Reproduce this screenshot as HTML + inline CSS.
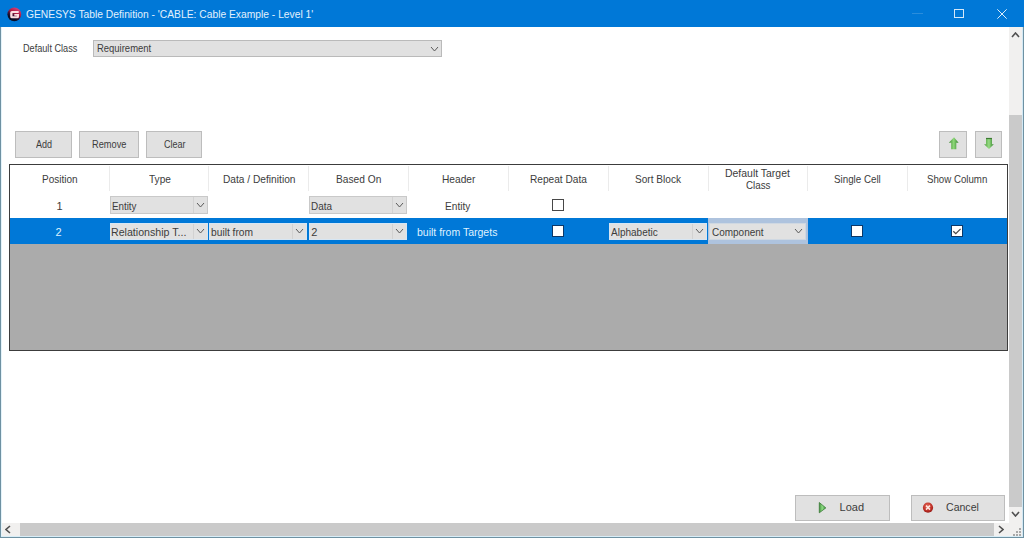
<!DOCTYPE html>
<html><head><meta charset="utf-8">
<style>
html,body{margin:0;padding:0;width:1024px;height:538px;overflow:hidden;background:#fff;}
body{position:relative;font-family:"Liberation Sans",sans-serif;}
div{position:absolute;box-sizing:border-box;}
svg{position:absolute;}
.t{white-space:nowrap;font-size:11px;line-height:11px;color:#3c3c3c;transform-origin:0 0;}
</style></head><body>

<div style="left:0px;top:0px;width:1024px;height:27px;background:#0078d7;"></div>
<svg style="left:7px;top:6.5px" width="15" height="15" viewBox="0 0 15 15">
  <defs><linearGradient id="g1" x1="0.75" y1="0.05" x2="0.25" y2="0.95"><stop offset="0" stop-color="#d8407a"/><stop offset="0.38" stop-color="#b01c44"/><stop offset="0.6" stop-color="#401234"/><stop offset="0.8" stop-color="#0a0c24"/></linearGradient></defs>
  <circle cx="7.3" cy="7.3" r="6.9" fill="url(#g1)"/>
  <path d="M11.7 4.0 H5.0 Q3.2 4.0 3.2 5.8 V9.4 Q3.2 11.3 5.0 11.3 H10.1 Q12.0 11.3 12.0 9.4 V7.0 H7.3 V8.8 H9.8 V9.3 H5.5 V6.0 H11.7 Z" fill="#fcdde2"/>
</svg>
<div class="t" style="left:26.00px;top:8.70px;transform:scaleX(0.935);color:#e2f1fd;">GENESYS Table Definition - 'CABLE: Cable Example - Level 1'</div>
<div style="left:912px;top:13px;width:11px;height:1px;background:#2a8ddc;"></div>
<div style="left:954px;top:9px;width:10px;height:9px;border:1px solid #d4e8f8;"></div>
<svg style="left:996px;top:8px" width="12" height="12" viewBox="0 0 12 12"><path d="M1.3 1.3 L10.7 10.7 M10.7 1.3 L1.3 10.7" stroke="#dcedfa" stroke-width="1"/></svg>
<div style="left:0px;top:27px;width:1px;height:511px;background:#6e91a2;"></div>
<div style="left:1023px;top:27px;width:1px;height:511px;background:#6e91a2;"></div>
<div style="left:0px;top:537px;width:1024px;height:1px;background:#6e91a2;"></div>
<div class="t" style="left:22.80px;top:42.80px;transform:scaleX(0.83);">Default Class</div>
<div style="left:93px;top:40px;width:349px;height:17px;background:#e1e1e1;border:1px solid #bababa;"></div>
<div class="t" style="left:96.80px;top:42.80px;transform:scaleX(0.86);">Requirement</div>
<svg style="position:absolute;left:430.00px;top:45.50px" width="9" height="6" viewBox="0 0 9 6"><path d="M1 1 L4.5 5 L8 1" fill="none" stroke="#5a5a5a" stroke-width="1.0"/></svg>
<div style="left:15px;top:131px;width:57px;height:27px;background:#e1e1e1;border:1px solid #bdbdbd;"></div>
<div class="t" style="left:36.30px;top:138.80px;transform:scaleX(0.82);">Add</div>
<div style="left:79px;top:131px;width:60px;height:27px;background:#e1e1e1;border:1px solid #bdbdbd;"></div>
<div class="t" style="left:91.60px;top:138.80px;transform:scaleX(0.84);">Remove</div>
<div style="left:146px;top:131px;width:56px;height:27px;background:#e1e1e1;border:1px solid #bdbdbd;"></div>
<div class="t" style="left:164.30px;top:138.80px;transform:scaleX(0.82);">Clear</div>
<div style="left:939px;top:131px;width:28px;height:27px;background:#e1e1e1;border:1px solid #bdbdbd;"></div>
<div style="left:975px;top:131px;width:27px;height:27px;background:#e1e1e1;border:1px solid #bdbdbd;"></div>
<svg style="left:944px;top:134px" width="20" height="20" viewBox="0 0 20 20">
<defs><linearGradient id="ga" x1="0" x2="1"><stop offset="0" stop-color="#3c8a30"/><stop offset="0.5" stop-color="#8fd87a"/><stop offset="1" stop-color="#2f7f28"/></linearGradient></defs>
<path d="M10 3.3 L14.6 8.7 H12.3 V15.2 H7.2 V8.7 H4.8 Z" fill="url(#ga)"/></svg>
<svg style="left:979px;top:134px" width="20" height="20" viewBox="0 0 20 20">
<defs><linearGradient id="gb" x1="0" x2="1"><stop offset="0" stop-color="#4a9a3c"/><stop offset="0.5" stop-color="#98dc84"/><stop offset="1" stop-color="#2f7f28"/></linearGradient></defs>
<path d="M7 3.9 H13 V10.2 H14.8 L10 15 L5.1 10.2 H7 Z" fill="url(#gb)"/><rect x="7" y="3.9" width="6" height="1.2" fill="#3d7a34"/></svg>
<div style="left:9px;top:164px;width:999px;height:187px;background:#ababab;border:1px solid #3c3c3c;"></div>
<div style="left:10px;top:165px;width:997px;height:53px;background:#fff;"></div>
<div style="left:10px;top:218px;width:997px;height:26px;background:#0078d7;"></div>
<div style="left:109px;top:166px;width:1px;height:25px;background:#ebebeb;"></div>
<div style="left:208px;top:166px;width:1px;height:25px;background:#ebebeb;"></div>
<div style="left:308px;top:166px;width:1px;height:25px;background:#ebebeb;"></div>
<div style="left:408px;top:166px;width:1px;height:25px;background:#ebebeb;"></div>
<div style="left:508px;top:166px;width:1px;height:25px;background:#ebebeb;"></div>
<div style="left:608px;top:166px;width:1px;height:25px;background:#ebebeb;"></div>
<div style="left:708px;top:166px;width:1px;height:25px;background:#ebebeb;"></div>
<div style="left:807px;top:166px;width:1px;height:25px;background:#ebebeb;"></div>
<div style="left:907px;top:166px;width:1px;height:25px;background:#ebebeb;"></div>
<div class="t" style="left:41.90px;top:173.50px;transform:scaleX(0.91);">Position</div>
<div class="t" style="left:148.80px;top:173.50px;transform:scaleX(0.92);">Type</div>
<div class="t" style="left:222.50px;top:173.50px;transform:scaleX(0.926);">Data / Definition</div>
<div class="t" style="left:335.80px;top:173.50px;transform:scaleX(0.926);">Based On</div>
<div class="t" style="left:442.00px;top:173.50px;transform:scaleX(0.925);">Header</div>
<div class="t" style="left:530.30px;top:173.50px;transform:scaleX(0.92);">Repeat Data</div>
<div class="t" style="left:635.40px;top:173.50px;transform:scaleX(0.918);">Sort Block</div>
<div class="t" style="left:834.20px;top:173.50px;transform:scaleX(0.89);">Single Cell</div>
<div class="t" style="left:926.70px;top:173.50px;transform:scaleX(0.88);">Show Column</div>
<div class="t" style="left:725.40px;top:168.30px;transform:scaleX(0.95);">Default Target</div>
<div class="t" style="left:745.50px;top:179.60px;transform:scaleX(0.89);">Class</div>
<div style="left:110px;top:196px;width:98px;height:18px;background:#e1e1e1;border:1px solid #c9c9c9;"></div>
<div style="left:193px;top:197px;width:1px;height:16px;background:#d2d2d2;"></div>
<svg style="position:absolute;left:196.00px;top:202.20px" width="9" height="6" viewBox="0 0 9 6"><path d="M1 1 L4.5 5 L8 1" fill="none" stroke="#5a5a5a" stroke-width="1.0"/></svg>
<div style="left:309px;top:196px;width:98px;height:18px;background:#e1e1e1;border:1px solid #c9c9c9;"></div>
<div style="left:392px;top:197px;width:1px;height:16px;background:#d2d2d2;"></div>
<svg style="position:absolute;left:395.00px;top:202.20px" width="9" height="6" viewBox="0 0 9 6"><path d="M1 1 L4.5 5 L8 1" fill="none" stroke="#5a5a5a" stroke-width="1.0"/></svg>
<div class="t" style="left:56.40px;top:200.50px;">1</div>
<div class="t" style="left:112.10px;top:200.50px;transform:scaleX(0.89);">Entity</div>
<div class="t" style="left:311.30px;top:200.50px;transform:scaleX(0.9);">Data</div>
<div class="t" style="left:444.50px;top:200.50px;transform:scaleX(0.92);">Entity</div>
<div style="left:552px;top:199px;width:12px;height:12px;background:#fff;border:1px solid #484848;"></div>
<div style="left:708px;top:218px;width:100px;height:26px;background:#aec3de;"></div>
<div style="left:110px;top:223px;width:98px;height:17px;background:#e1e1e1;border:1px solid #d6e6f4;"></div>
<div style="left:193px;top:224px;width:1px;height:15px;background:#d2d2d2;"></div>
<svg style="position:absolute;left:196.00px;top:228.20px" width="9" height="6" viewBox="0 0 9 6"><path d="M1 1 L4.5 5 L8 1" fill="none" stroke="#5a5a5a" stroke-width="1.0"/></svg>
<div style="left:209px;top:223px;width:98px;height:17px;background:#e1e1e1;border:1px solid #d6e6f4;"></div>
<div style="left:292px;top:224px;width:1px;height:15px;background:#d2d2d2;"></div>
<svg style="position:absolute;left:295.00px;top:228.20px" width="9" height="6" viewBox="0 0 9 6"><path d="M1 1 L4.5 5 L8 1" fill="none" stroke="#5a5a5a" stroke-width="1.0"/></svg>
<div style="left:309px;top:223px;width:98px;height:17px;background:#e1e1e1;border:1px solid #d6e6f4;"></div>
<div style="left:392px;top:224px;width:1px;height:15px;background:#d2d2d2;"></div>
<svg style="position:absolute;left:395.00px;top:228.20px" width="9" height="6" viewBox="0 0 9 6"><path d="M1 1 L4.5 5 L8 1" fill="none" stroke="#5a5a5a" stroke-width="1.0"/></svg>
<div style="left:609px;top:223px;width:98px;height:17px;background:#e1e1e1;border:1px solid #d6e6f4;"></div>
<div style="left:692px;top:224px;width:1px;height:15px;background:#d2d2d2;"></div>
<svg style="position:absolute;left:695.00px;top:228.20px" width="9" height="6" viewBox="0 0 9 6"><path d="M1 1 L4.5 5 L8 1" fill="none" stroke="#5a5a5a" stroke-width="1.0"/></svg>
<div style="left:709px;top:223px;width:97px;height:17px;background:#e1e1e1;border:1px solid #cfd8e2;"></div>
<svg style="position:absolute;left:794.00px;top:228.20px" width="9" height="6" viewBox="0 0 9 6"><path d="M1 1 L4.5 5 L8 1" fill="none" stroke="#5a5a5a" stroke-width="1.0"/></svg>
<div class="t" style="left:55.60px;top:227.00px;color:#dff1ff;">2</div>
<div class="t" style="left:111.40px;top:226.50px;transform:scaleX(0.965);">Relationship T...</div>
<div class="t" style="left:211.30px;top:226.50px;transform:scaleX(0.93);">built from</div>
<div class="t" style="left:311.30px;top:226.50px;">2</div>
<div class="t" style="left:416.50px;top:226.50px;transform:scaleX(0.955);color:#dff1ff;">built from Targets</div>
<div class="t" style="left:611.30px;top:226.50px;transform:scaleX(0.91);">Alphabetic</div>
<div class="t" style="left:711.50px;top:226.50px;transform:scaleX(0.907);">Component</div>
<div style="left:552px;top:225px;width:12px;height:12px;background:#fff;border:1px solid #0c3868;"></div>
<div style="left:851px;top:225px;width:12px;height:12px;background:#fff;border:1px solid #0c3868;"></div>
<div style="left:951px;top:225px;width:12px;height:12px;background:#fff;border:1px solid #0c3868;"></div>
<svg style="left:951px;top:225px" width="12" height="12" viewBox="0 0 12 12"><path d="M2.3 6.3 L4.8 8.7 L9.6 3.9" fill="none" stroke="#4a4a4a" stroke-width="1.3"/></svg>
<div style="left:1009px;top:27px;width:13px;height:496px;background:#f1f0ef;"></div>
<div style="left:1009px;top:115px;width:13px;height:392px;background:#cacaca;"></div>
<div style="left:1px;top:523px;width:1008px;height:13px;background:#f1f0ef;"></div>
<div style="left:20px;top:523px;width:974px;height:13px;background:#cacaca;"></div>
<div style="left:1009px;top:523px;width:13px;height:13px;background:#f1f0ef;"></div>
<div style="left:1px;top:27px;width:1px;height:509px;background:#e4f3fa;"></div>
<div style="left:1022px;top:27px;width:1px;height:509px;background:#d2e8f4;"></div>
<div style="left:1px;top:536px;width:1022px;height:1px;background:#d8edf7;"></div>
<svg style="position:absolute;left:1011.00px;top:32.00px" width="9" height="6" viewBox="0 0 9 6"><path d="M1 5 L4.5 1 L8 5" fill="none" stroke="#505050" stroke-width="1.6"/></svg>
<svg style="position:absolute;left:1011.00px;top:511.20px" width="9" height="6" viewBox="0 0 9 6"><path d="M1 1 L4.5 5 L8 1" fill="none" stroke="#505050" stroke-width="1.6"/></svg>
<svg style="position:absolute;left:4.50px;top:525.00px" width="6" height="9" viewBox="0 0 6 9"><path d="M5 1 L1 4.5 L5 8" fill="none" stroke="#505050" stroke-width="1.6"/></svg>
<svg style="position:absolute;left:997.50px;top:525.00px" width="6" height="9" viewBox="0 0 6 9"><path d="M1 1 L5 4.5 L1 8" fill="none" stroke="#505050" stroke-width="1.6"/></svg>
<div style="left:1019px;top:528px;width:2px;height:2px;background:#a8a8a8;"></div>
<div style="left:1016px;top:531px;width:2px;height:2px;background:#a8a8a8;"></div>
<div style="left:1019px;top:531px;width:2px;height:2px;background:#a8a8a8;"></div>
<div style="left:1013px;top:534px;width:2px;height:2px;background:#a8a8a8;"></div>
<div style="left:1016px;top:534px;width:2px;height:2px;background:#a8a8a8;"></div>
<div style="left:1019px;top:534px;width:2px;height:2px;background:#a8a8a8;"></div>
<div style="left:795px;top:495px;width:95px;height:26px;background:#e1e1e1;border:1px solid #bdbdbd;"></div>
<div class="t" style="left:839.60px;top:501.70px;">Load</div>
<svg style="left:812px;top:498px" width="20" height="20" viewBox="0 0 20 20">
<defs><linearGradient id="gp" x1="0" x2="1"><stop offset="0" stop-color="#3f8f3a"/><stop offset="0.45" stop-color="#8fdc84"/><stop offset="1" stop-color="#3c9440"/></linearGradient></defs>
<path d="M7.3 4.5 L13.8 9.9 L7.3 14.8 Z" fill="url(#gp)" stroke="#3a7a36" stroke-width="0.8" stroke-linejoin="round"/></svg>
<div style="left:911px;top:495px;width:94px;height:26px;background:#e1e1e1;border:1px solid #bdbdbd;"></div>
<div class="t" style="left:945.60px;top:501.70px;transform:scaleX(0.96);">Cancel</div>
<svg style="left:918px;top:498px" width="20" height="20" viewBox="0 0 20 20">
<defs><radialGradient id="gc" cx="0.45" cy="0.35" r="0.7"><stop offset="0" stop-color="#e86a5a"/><stop offset="0.7" stop-color="#b82a22"/><stop offset="1" stop-color="#8a1a18"/></radialGradient></defs>
<circle cx="10" cy="9.6" r="5.1" fill="url(#gc)"/>
<path d="M8 7.6 L12 11.6 M12 7.6 L8 11.6" stroke="#ffe6e0" stroke-width="1.5"/></svg>
</body></html>
